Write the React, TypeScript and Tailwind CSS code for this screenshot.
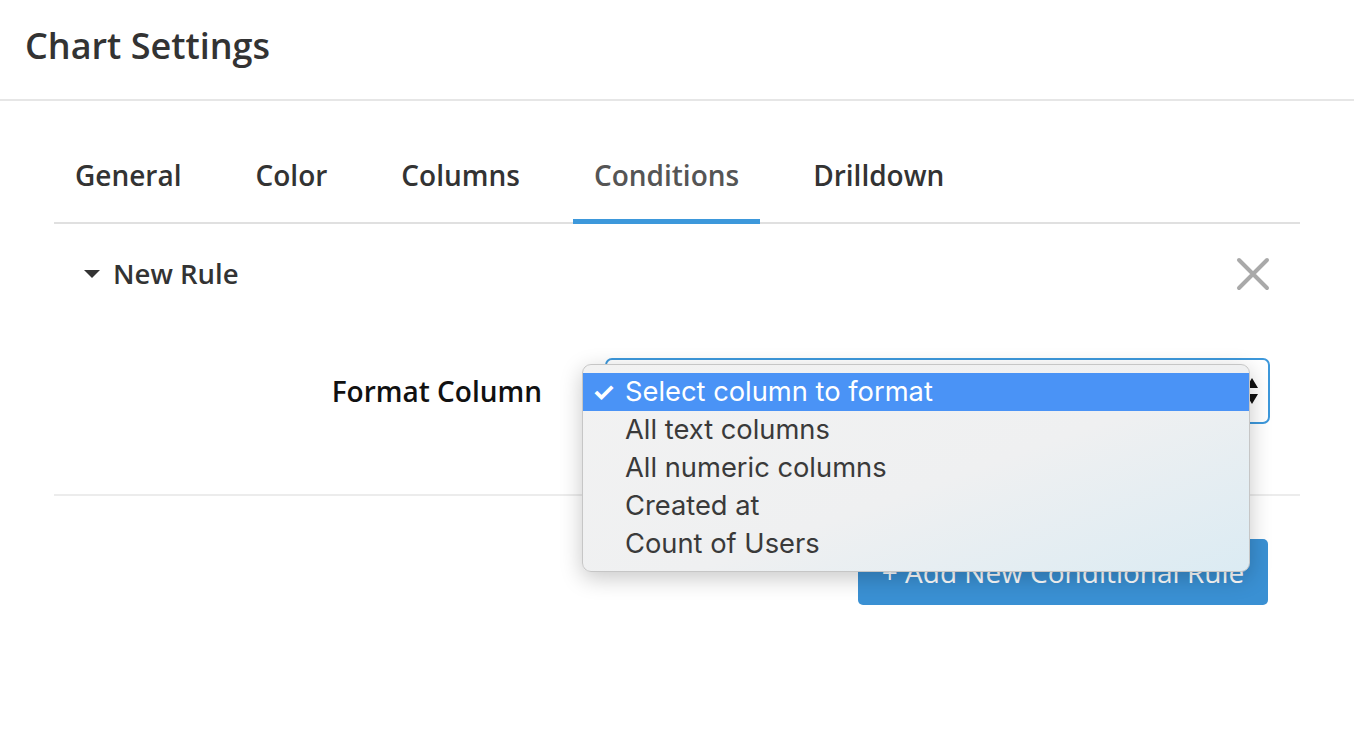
import { useState } from 'react'

const tabs = ['General', 'Color', 'Columns', 'Conditions', 'Drilldown']
const options = ['Select column to format', 'All text columns', 'All numeric columns', 'Created at', 'Count of Users']

export default function App() {
  const [active, setActive] = useState('Conditions')
  const [open, setOpen] = useState(true)

  return (
    <div className="min-h-[736px] bg-white text-[#333] font-['Open_Sans',sans-serif]">
      <div className="h-[101px] border-b-2 border-[#e6e6e6] px-[25px] pt-[22px]">
        <h1 className="text-[36px] font-semibold leading-[48px] text-[#333]">Chart Settings</h1>
      </div>

      <div className="px-[54px]">
        <div className="flex gap-[32px] border-b-2 border-[#e0e0e0] pt-[56px]">
          {tabs.map((t) => (
            <button
              key={t}
              onClick={() => setActive(t)}
              className={
                'px-[21px] pb-[26px] -mb-[2px] border-b-[5px] text-[28px] font-semibold leading-[36px] ' +
                (t === active ? 'border-[#3d98db] text-[#555]' : 'border-transparent text-[#333]')
              }
            >
              {t}
            </button>
          ))}
        </div>

        <div className="border-b-2 border-[#ececec] pb-[70px]">
          <div className="flex items-center justify-between px-[30px] pt-[32px]">
            <div className="flex items-center gap-[13px]">
              <svg width="16" height="10" viewBox="0 0 16 10">
                <path d="M0 1h16L8 9z" fill="#333" />
              </svg>
              <span className="text-[27.5px] font-semibold leading-[36px] text-[#333]">New Rule</span>
            </div>
            <svg width="34" height="34" viewBox="0 0 34 34">
              <path d="M3 3l28 28M31 3L3 31" stroke="#a9a9a9" strokeWidth="4" strokeLinecap="round" />
            </svg>
          </div>

          <div className="mt-[66px] flex items-center pr-[30px]">
            <label className="w-[488px] shrink-0 text-right text-[28px] font-semibold text-[#111]">Format Column</label>
            <div className="relative ml-[63px] flex-1">
              <button
                onClick={() => setOpen(!open)}
                className="flex h-[66px] w-full items-center justify-between rounded-[7px] border-2 border-[#3d98db] bg-white pl-[20px] pr-[10px] font-['Inter',sans-serif] text-[27px] text-[#222]"
              >
                <span>Select column to format</span>
                <svg width="12" height="30" viewBox="0 0 12 30">
                  <path d="M6 2l6 10H0zM6 28L0 18h12z" fill="#111" />
                </svg>
              </button>
              {open && (
                <div className="absolute left-[-23px] top-[6px] w-[668px] rounded-[9px] border border-[#c6c6c6] bg-[linear-gradient(160deg,#f2f2f2_0%,#eff0f1_55%,#dbebf3_100%)] py-[8px] shadow-[0_6px_22px_rgba(0,0,0,0.22)] font-['Inter',sans-serif]">
                  {options.map((o, i) => (
                    <div
                      key={o}
                      className={
                        'flex h-[38px] items-center text-[27.3px] leading-[38px] ' +
                        (i === 0 ? 'bg-[#4a93f6] text-white' : 'text-[#3a3a3a]')
                      }
                    >
                      <span className="w-[42px] pl-[9px] text-[26px] font-bold">{i === 0 ? '✓' : ''}</span>
                      <span>{o}</span>
                    </div>
                  ))}
                </div>
              )}
            </div>
          </div>
        </div>

        <div className="flex justify-end pr-[32px] pt-[43px]">
          <button className="h-[66px] w-[410px] rounded-[5px] bg-[#3a90d3] text-[28px] text-white">
            + Add New Conditional Rule
          </button>
        </div>
      </div>
    </div>
  )
}
